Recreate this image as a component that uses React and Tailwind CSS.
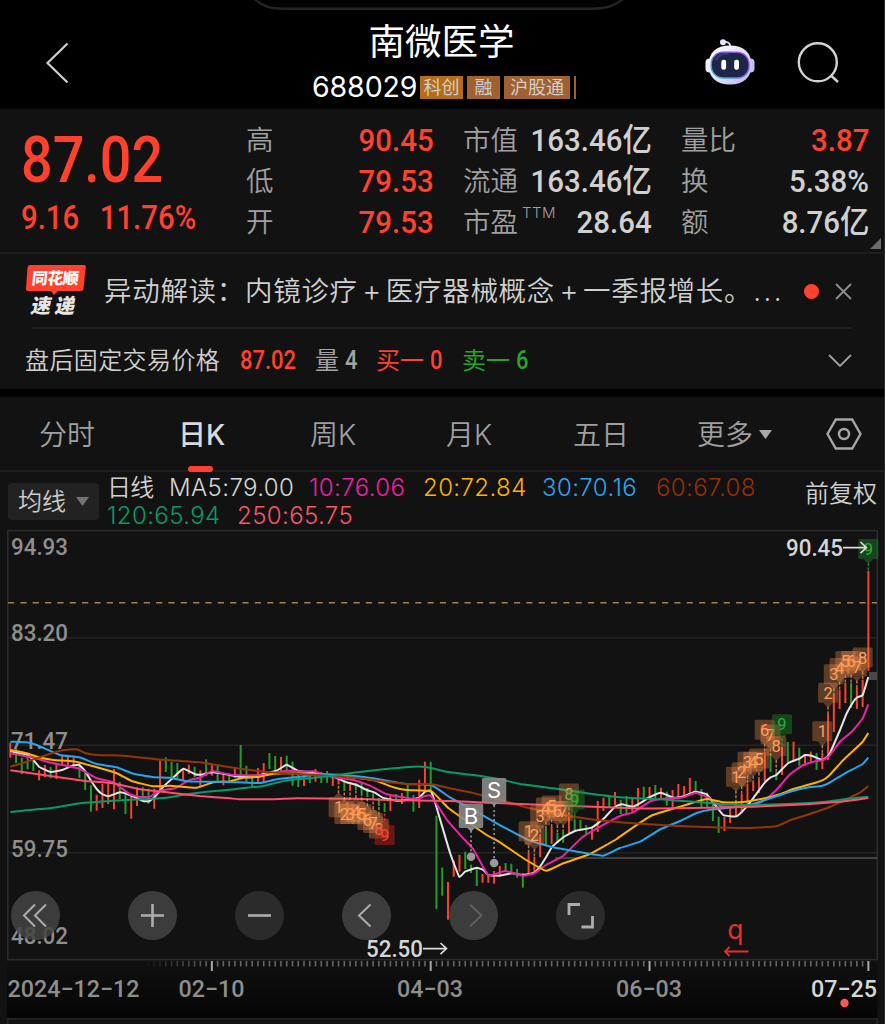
import React from "react";

const SANS = "font-['Inter','Noto_Sans_CJK_SC',sans-serif]";
const DIGITS = "font-['Roboto','Noto_Sans_CJK_SC',sans-serif] font-medium";

const STATS = [
  {
    width: "ml-[246px] w-[188px]",
    rows: [
      { label: "高", value: "90.45", up: true },
      { label: "低", value: "79.53", up: true },
      { label: "开", value: "79.53", up: true },
    ],
  },
  {
    width: "ml-[29px] w-[189px]",
    rows: [
      { label: "市值", value: "163.46", unit: "亿" },
      { label: "流通", value: "163.46", unit: "亿" },
      { label: "市盈", sup: "TTM", value: "28.64" },
    ],
  },
  {
    width: "ml-[29px] w-[188px]",
    rows: [
      { label: "量比", value: "3.87", up: true },
      { label: "换", value: "5.38%" },
      { label: "额", value: "8.76", unit: "亿" },
    ],
  },
];

const AVERAGES = [
  { label: "MA5:79.00", className: "w-[140px] text-[#d6d6d6]" },
  { label: "10:76.06", className: "w-[114px] text-[#ee1fa2]" },
  { label: "20:72.84", className: "w-[119px] text-[#ffb000]" },
  { label: "30:70.16", className: "w-[114px] text-[#27a5f2]" },
  { label: "60:67.08", className: "text-[#953000]" },
];

// One entry per trading day: direction, high, low
const CANDLES = `r742.7,757.7 g749,763 g757.7,774 g755,769.3 g758.3,771 r770.3,780.3 r765,777 g767,778.3 r764.3,779 r755,765
r756,765.7 r757.3,765.7 g762.3,778 g772.3,790 g785.3,811.7 r794.7,810.7 r783.7,808 r782.3,804 r769,809.3 g782,799
g794.3,814 r793.7,818.7 r787.3,806 g787.3,799.3 g788.7,803.7 r788.7,808.7 r760.3,791.7 g757.3,772 g762,777.3 g763,778.3
r768.3,780 r764.7,774 g766.7,777.3 r770.3,786 g759.3,776 r763.7,775.7 g764.3,781 r774,785.3 g775,782 r767.7,778
g745,778 g765.7,783 g775,787 r768,782 r763,782 g753,769 g756,772 r757,771 g755.7,771 g761.7,785.7
g771.7,787 r773,786 g773,783 r769,781.7 g772,783 g771,782.7 r776.7,786 r777,784 g780,791 r782,791
g783,790 g782.7,793 g788,797 g793,800 g798,806 g803,812 r795,811 g794,800 r793,804 g783.7,800
g795,811.7 r779.7,808 r761.7,792 g761.7,793 g815.7,909 g867.7,895.7 r882,919.7 r860.7,876.7 r855,871.7 g851.7,869
g864.7,873 g869,886 r874,882.7 r874,882.7 r871,883.7 r866,875 g863,871 g863.7,874 g869,877.7 g873,887.7
r853,873 r857,871.7 r836.7,857 g829,845 r827,844 g833,843 g831.7,842.7 r814,833 g820,830 g820,829
g825,835 r828,839.7 r801,832 r797.7,811 g796.7,808 r792,805 g800,814 g796,813 r799,811.7 r788,806.7
g786.7,800 r787,797 g785,799 r787.7,798 g791.7,805.7 r790,807.7 r784,799 r786,796.7 r778,795 g781,794
g789,807 g792.7,808 g799.7,821 g816.7,833 r816.7,831 r807.7,823 r801,816 r794,813 r783.7,805 r781.7,791
r780,793 r751.7,781.7 g755,772 g771,780 r746.7,775 g742,762 r741.7,761 g747.7,765.7 r755,765.7 r751.7,762
g753,770 r753,769 r714,760 r695,732 r690,709 r683,703 g683,708 r687.7,709 r679.7,707 r571,671`
  .split(/\s+/)
  .map((entry) => {
    const [high, low] = entry.slice(1).split(",").map(Number);
    return { up: entry[0] === "r", high, low };
  });

const dayX = (i) => 10.3 + i * 5.759;

const MA_LINES = [
  {
    color: "#e4e4e4",
    points:
      "10.3,750.7 16,752.7 27.3,755 33.3,760 39,766.7 50.7,772 62,770 73.7,765.3 79.3,765 85,771 90.7,780.3 96.7,789 102,794 108.3,796.3 120,792.3 131.7,795.7 143.3,801 149,801.3 155,796.7 163.3,786.7 171.7,779 183.3,768.7 195,774.3 200.7,774.7 213.3,772.3 230,775 240,776.7 253.3,777 263.3,774 276.7,770.7 286.7,764.7 298.3,771 316.7,772.7 335,777.3 346.7,782.3 356.7,785 366.7,790 375,792.7 383.3,798 396.7,800.7 406.7,800 419.3,797.7 425,791.7 430.7,790.7 435,802.3 450,852.7 459.3,876.7 465,871.7 476.7,867.7 483.3,870 488.3,875 500,875.7 511.7,873.3 523,875 534.3,872.7 540,866.7 546,857.3 551.7,847.3 563.3,837.3 575,831 591.7,827.7 603.3,819 615,806.7 621.7,804.3 633.3,806.7 641,802.7 648,798 661,792.7 673.3,797.7 684,796.3 695,791.7 706.7,794.3 713,802.3 723.3,815 736.7,816.3 746.7,806.7 755,795.7 765,782.3 770.7,777.3 776.3,775 788.3,763 800,758.3 805,755 811.7,755.7 822.3,760 829,755 840,730 846.7,713.3 853.3,701.7 857.3,697.3 862.7,695 868.3,677",
  },
  {
    color: "#ee22a4",
    points:
      "10.3,753.3 33.3,757.7 50.7,762.7 79.3,768.7 96.7,778.3 113.3,782.3 130,794.3 140,797 150,796.7 160,790.7 175,788.3 190,779.7 200,777.7 211.7,771 223.3,773.3 233.3,775 263,775 286.7,770.7 303,771.7 313,771.3 335,777.3 353.3,780 370,785.7 386.7,794.3 400,796.7 416.7,799.3 425,796 430.7,795.7 448.3,821.7 463.3,838.3 473.3,849.3 488.3,875 505,871 523,875.7 534.3,873.3 546,865 563.3,855.7 581.7,837.7 600,826.7 620,816 633.3,812.3 650,801.5 661,799 683.3,797.3 695.7,792.7 708.3,797.7 720,805.7 736.7,806.7 753.3,805 765,800 776.3,790 790,774.3 803.3,765 816.7,761 822.3,760.3 829,756.3 840,741.7 851.7,731.7 862.7,718.3 868.3,704.3",
  },
  {
    color: "#ffb000",
    points:
      "10.3,750 26.7,753.3 39,757.3 53.3,760 73.3,761.3 93.3,766.3 116.7,773.3 131.7,781 153.3,786.3 170,785.7 196.7,787.7 213.3,782.3 230,781.5 243.3,777.7 260,776.7 273.3,773.7 303,773.7 335,775.7 360,778.3 376.7,781 393.3,787.3 406.7,790 431.7,791.3 448.3,808 486.7,835 500,842.3 523,858 546,870.7 563.3,863.3 590,854 616.7,839 631.7,828.3 651.7,815.5 680,806.7 706.7,799 723.3,802.3 740,802.3 765,798.3 780,794.3 793.3,789 810,784.3 822.3,780.3 829,775.7 843.3,760 862.7,741.7 868.3,733",
  },
  {
    color: "#27a5f2",
    points:
      "10.3,741.7 26.7,742.3 36.7,745 60,755 79.3,757.3 96.7,764 116.7,767.3 133.3,773.7 155,777.3 170,777.7 186.7,781.3 230,782 260,783 276.7,779.3 300,776.7 320,774.3 346.7,775.3 373.3,778.3 406.7,784 431.7,785.3 450,797.3 473.3,810 496.7,823.3 530,840.7 553.3,847.3 586.7,853.3 603.3,855.7 620,848 640,841.7 660,829.5 680,821 696.7,813 710,809.7 746.7,805.7 760,801.7 790,791.7 806.7,787.7 822.3,785.7 829,783 846.7,772.3 862.7,764 868.3,757.7",
  },
  {
    color: "#963403",
    points:
      "10.3,766.7 26.7,761.7 43.3,756 63.3,750 76.7,749.3 85,753 96.7,755 123.3,755.7 156.7,759.3 200,762.3 230,767.3 263.3,771.7 286.7,773.3 326.7,775.7 360,778.3 380,781 406.7,784 431.7,784.3 450,788.3 470,792.3 496.7,799 530,808.3 563.3,815 596.7,820 633.3,823.3 673.3,825.7 706.7,827 743.3,828 776.3,826.3 790,820.3 806.7,815 826.7,808.3 846.7,799 860,792.7 868.3,786",
  },
  {
    color: "#089a68",
    points:
      "10.3,812 26.7,810.3 53.3,807.7 80,803.3 113.3,800.7 140,799.3 166.7,797.7 186.7,794.3 206.7,791.7 230,789.7 243.3,788 263.3,786 286.7,780.3 313.3,777.7 333.3,775.7 353.3,772.7 383.3,769.3 413.3,766.7 426.7,767.3 450,772.3 473.3,775 500,779.3 520,784 553.3,788.3 586.7,793.3 620,797.3 660,799.3 680,800.7 713,803.3 743.3,805 780,804.3 820,802.3 846.7,799 868.3,796.7",
  },
  {
    color: "#ff4f6d",
    points:
      "10.3,770.3 83.3,780.7 113,783.3 140,789.3 166.7,792.3 200,796 230,798.3 240,799.3 273.3,799.3 296.7,798.3 353.3,798.7 386.7,800 450,801 486.7,802.7 553.3,805.3 620,807.7 650,808.5 706.7,807.7 753.3,806.7 806.7,804.3 840,801.7 868.3,798",
  },
];

// Nine-turn sequence marks: [day index, centre y, digit, tone]
const MARKS_BELOW = [
  [57, 807.3, 1], [58, 814, 2], [59, 814, 3], [60, 812, 4], [61, 814.3, 5],
  [62, 820, 6], [63, 823, 7], [64, 828.5, 8], [65, 835, 9, "red"],
];
const MARKS_ABOVE = [
  [90, 831.3, 1], [91, 835, 2], [92, 815.5, 3], [93, 807.5, 4], [94, 805.5, 5],
  [95, 811, 6], [96, 811, 7], [97, 793.5, 8], [98, 799.5, 9, "green"],
  [126, 776.7, 1], [127, 772.3, 2], [128, 761.7, 3], [129, 761.7, 4],
  [130, 758.5, 5], [131, 729.7, 6], [132, 734.5, 7], [133, 746, 8],
  [134, 724.3, 9, "green"], [141, 731.3, 1], [142, 692.7, 2], [143, 674.3, 3],
  [144, 668, 4], [145, 661, 5], [146, 661, 6], [147, 666.5, 7], [148, 657.5, 8],
  [149, 549, 9, "green"],
];
const TONES = {
  orange: { box: "#ff9550", opacity: 0.32, text: "#ffa161" },
  red: { box: "#c8281e", opacity: 0.45, text: "#ff3b30" },
  green: { box: "#1f8a2c", opacity: 0.42, text: "#27b035" },
};

function smooth(points) {
  const p = points.split(" ").map((s) => s.split(",").map(Number));
  let d = `M${p[0][0]} ${p[0][1]}`;
  for (let i = 0; i < p.length - 1; i++) {
    const a = p[Math.max(i - 1, 0)];
    const b = p[i];
    const c = p[i + 1];
    const e = p[Math.min(i + 2, p.length - 1)];
    const k = (c[0] - b[0]) / 8;
    const s1 = (c[1] - a[1]) / (c[0] - a[0]);
    const s2 = (e[1] - b[1]) / (e[0] - b[0]);
    d += `C${b[0] + k} ${b[1] + s1 * k} ${c[0] - k} ${c[1] - s2 * k} ${c[0]} ${c[1]}`;
  }
  return d;
}

function Mark({ day, y, digit, tone = "orange", below = false }) {
  const x = dayX(day);
  const t = TONES[tone];
  const dir = below ? -1 : 1;
  const edge = y + dir * 10;
  const end = below ? CANDLES[day].low : CANDLES[day].high;
  return (
    <g>
      <line x1={x} x2={x} y1={edge + dir * 4} y2={end} stroke={t.text} strokeWidth="1.5" strokeDasharray="3 1.5" opacity=".7" />
      <g fill={t.box} opacity={t.opacity}>
        <rect x={x - 10} y={y - 10} width="20" height="20" rx="1.5" />
        <path d={`M${x - 5} ${edge}h10l-5 ${dir * 5}z`} />
      </g>
      <text x={x} y={y + 6} fontSize="16.5" textAnchor="middle" fill={t.text}>
        {digit}
      </text>
    </g>
  );
}

function AxisText({ x, y, width, fill = "#8e8e8e", children }) {
  return (
    <text x={x} y={y} fontSize="24" fontWeight="500" fill={fill} textLength={width} lengthAdjust="spacingAndGlyphs">
      {children}
    </text>
  );
}

function TradeTag({ x, y, letter, dotY }) {
  return (
    <g>
      <line x1={x} x2={x} y1={y + 15} y2={dotY} stroke="#999" strokeWidth="1.6" strokeDasharray="2 2.6" />
      <circle cx={x} cy={dotY} r="4.3" fill="#999" />
      <rect x={x - 12.2} y={y - 12.3} width="24.4" height="24.6" rx="1.5" fill="#8c8c8c" opacity=".88" />
      <path d={`M${x - 4} ${y + 12}h8l-4 4z`} fill="#8c8c8c" />
      <text x={x} y={y + 8} fontSize="22" textAnchor="middle" fill="#fff" className="font-['Inter',sans-serif]">
        {letter}
      </text>
    </g>
  );
}

function KLineChart() {
  const ticks = [];
  for (let i = 24; i < 150; i++) {
    const major = i === 35 || i === 73 || i === 111 || i === 149;
    ticks.push(
      <line
        key={i}
        x1={dayX(i)}
        x2={dayX(i)}
        y1="961"
        y2={major ? 971 : 966.5}
        stroke={major ? "#a8a8a8" : "#666"}
        strokeWidth={major ? 2 : 1.6}
        opacity={major ? 1 : Math.min(1, (i - 23) / 12)}
      />
    );
  }
  return (
    <svg width="885" height="495" viewBox="0 529 885 495" className="block font-['Roboto',sans-serif] font-normal">
      <defs>
        <linearGradient id="axis" x1="0" y1="0" x2="0" y2="1">
          <stop offset="0" stopColor="#101010" />
          <stop offset="1" stopColor="#050505" />
        </linearGradient>
      </defs>
      <rect x="7" y="960" width="870.5" height="58" fill="url(#axis)" />
      <g stroke="#252525" strokeWidth="1.6" fill="none">
        <path d="M8 637.8H877M8 745.3H877M8 852.8H877" stroke="#242424" />
        <rect x="7.8" y="530.6" width="869.4" height="429" stroke="#2b2b2b" />
        <path d="M7.8 1024V1018.7H877.2V1024" />
      </g>
      <path d="M555 858H877" stroke="#414141" strokeWidth="1.8" />
      <path d="M8 602.8H877" stroke="#a08156" strokeWidth="1.5" strokeDasharray="6.2 6.14" />

      {CANDLES.map((c, i) => (
        <rect key={i} x={dayX(i) - 1} y={c.high} width="2" height={c.low - c.high} fill={c.up ? "#f5432f" : "#249b2a"} />
      ))}
      <AxisText x="11" y="554.5" width="57">94.93</AxisText>
      <AxisText x="11" y="641.2" width="57">83.20</AxisText>
      <AxisText x="11" y="749" width="57">71.47</AxisText>
      <AxisText x="11" y="856.8" width="57">59.75</AxisText>
      <AxisText x="11" y="943.6" width="57">48.02</AxisText>

      {MA_LINES.map((line) => (
        <path key={line.color} d={smooth(line.points)} fill="none" stroke={line.color} strokeWidth="2" strokeLinejoin="round" />
      ))}
      <rect x="869" y="672" width="8" height="8" fill="#484848" />

      <TradeTag x={471} y={815.8} letter="B" dotY={856.7} />
      <TradeTag x={494.1} y={790.3} letter="S" dotY={863} />

      {MARKS_BELOW.map(([day, y, digit, tone]) => (
        <Mark key={day} day={day} y={y} digit={digit} tone={tone} below />
      ))}
      {MARKS_ABOVE.map(([day, y, digit, tone]) => (
        <Mark key={day} day={day} y={y} digit={digit} tone={tone} />
      ))}

      <AxisText x="786" y="556.2" width="57" fill="#d6d6d6">90.45</AxisText>
      <path d="M843 547.6H866M860.5 542l6 5.6-6 5.6" fill="none" stroke="#dcdcdc" strokeWidth="1.6" />
      <AxisText x="366" y="957.4" width="57" fill="#d6d6d6">52.50</AxisText>
      <path d="M423 948.6H446M440.5 943l6 5.6-6 5.6" fill="none" stroke="#dcdcdc" strokeWidth="1.6" />

      <text x="735.5" y="939" fontSize="26" textAnchor="middle" fill="#e62e2e" className="font-['DejaVu_Sans',sans-serif]">q</text>
      <path d="M748.5 951.5H725M729.5 947l-4.5 4.5 4.5 4.5" fill="none" stroke="#e62e2e" strokeWidth="1.8" />

      {ticks}
      <AxisText x="7.5" y="996.8" width="132">2024−12−12</AxisText>
      <AxisText x="178.5" y="996.8" width="66">02−10</AxisText>
      <AxisText x="397" y="996.8" width="66">04−03</AxisText>
      <AxisText x="616" y="996.8" width="66">06−03</AxisText>
      <AxisText x="811" y="996.8" width="66" fill="#d6d6d6">07−25</AxisText>
      <circle cx="844.5" cy="1003" r="4.2" fill="#ff5757" />
    </svg>
  );
}

function RoundButton({ dim = false, className = "", children }) {
  return (
    <button className={`flex size-[49px] items-center justify-center rounded-full ${dim ? "bg-[#2f2f2f]/90" : "bg-[#444444]/85"} ${className}`}>
      <svg width="49" height="49" viewBox="0 0 49 49" fill="none" stroke="currentColor" strokeWidth="2">
        {children}
      </svg>
    </button>
  );
}

function RobotIcon() {
  return (
    <svg width="52" height="48" viewBox="0 0 52 48">
      <defs>
        <linearGradient id="shell" x1="0" y1="0" x2="1" y2="1">
          <stop offset="0" stopColor="#ffffff" />
          <stop offset=".6" stopColor="#dcdaf4" />
          <stop offset="1" stopColor="#b5b0e6" />
        </linearGradient>
        <linearGradient id="rim" x1="0" y1="1" x2="1" y2="0">
          <stop offset="0" stopColor="#3fc4e8" />
          <stop offset=".55" stopColor="#6a5ae8" />
          <stop offset="1" stopColor="#b34ff0" />
        </linearGradient>
      </defs>
      <path d="M19 4.2C23 3 26 4.500 26.500 9" fill="none" stroke="#dddcf2" strokeWidth="1.800" />
      <circle cx="19" cy="4.300" r="3" fill="#e9e8fa" />
      <rect x="1.500" y="20.500" width="8" height="14" rx="4" fill="#efeefb" />
      <rect x="42.500" y="20.500" width="8" height="14" rx="4" fill="#c4c0ea" />
      <path d="M26 7.500c14 0 21.500 7.500 21.500 19.500S40 46.500 26 46.500 4.500 39 4.500 27 12 7.500 26 7.500z" fill="url(#shell)" />
      <rect x="7.200" y="14.200" width="37.800" height="25.800" rx="12" fill="#1e2547" stroke="url(#rim)" strokeWidth="1.400" />
      <path d="M12 22c2-5 7-6.500 13-6.500" fill="none" stroke="#46507c" strokeWidth="2" opacity=".6" />
      <rect x="17.300" y="21.800" width="4.800" height="10" rx="2.200" fill="#fff" />
      <rect x="30.200" y="21.800" width="4.800" height="10" rx="2.200" fill="#fff" />
    </svg>
  );
}

function Header() {
  return (
    <header className="relative flex h-[109px] justify-between bg-black">
      <svg width="372" height="12" viewBox="253 0 372 12" className="absolute top-0 left-[253px]">
        <path d="M254 -2Q263 8.800 283 8.800H592Q613 8.800 624 -2" fill="#020202" stroke="#242424" strokeWidth="2.400" />
      </svg>
      <button className="ml-[45px] mt-[42px] h-[42px]">
        <svg width="25" height="42" viewBox="0 0 25 42" fill="none" stroke="#cfcfcf" strokeWidth="2.200">
          <path d="M22.500 1.500 2.500 21l20 19.500" />
        </svg>
      </button>
      <div className="absolute top-[20px] left-[312px] flex w-[266px] flex-col">
        <h1 className="pr-[7px] text-center text-[36.500px] leading-[44px] text-white">南微医学</h1>
        <div className="flex h-[46px] items-center">
          <span className="w-[108px] text-[28.500px] leading-[46px] tracking-[-0.100px] text-white">688029</span>
          <div className="flex h-[23px] gap-1 text-[18px] leading-[23px] text-[#cfcfcf]">
            <span className="w-[43px] bg-[#b36d16] text-center">科创</span>
            <span className="w-[33px] bg-[#9f6132] text-center">融</span>
            <span className="w-[66px] bg-[#9f6132] text-center">沪股通</span>
            <span className="w-[2px] bg-[#9f6132]" />
          </div>
        </div>
      </div>
      <div className="mr-[45px] flex">
        <button className="mt-[38px] mr-[40px] h-12">
          <RobotIcon />
        </button>
        <button className="mt-[41px] h-[44px]">
          <svg width="44" height="44" viewBox="0 0 44 44" fill="none" stroke="#d2d2d2" strokeWidth="2.400">
            <circle cx="21.800" cy="21.300" r="19" />
            <path d="M34.500 34l7.500 7" />
          </svg>
        </button>
      </div>
    </header>
  );
}

function Quote() {
  return (
    <section className="relative flex h-[145px] border-b-2 border-[#1e1e1e]">
      <div className={`absolute top-0 left-0 text-[#ff412e] ${DIGITS}`}>
        <div className="mt-[13px] ml-[21px] origin-left scale-x-[0.87] text-[64px] leading-[77px] whitespace-nowrap">87.02</div>
        <div className="mt-[2px] ml-[21px] flex origin-left scale-x-[0.89] gap-[23px] text-[33px] leading-[34px] whitespace-nowrap">
          <span>9.16</span>
          <span>11.76%</span>
        </div>
      </div>
      {STATS.map((col) => (
        <div key={col.width} className={`flex flex-col pt-[10px] ${col.width}`}>
          {col.rows.map((row) => (
            <div key={row.label} className="flex h-[41px] items-center justify-between whitespace-nowrap">
              <span className="mt-[3px] text-[27.500px] font-[350] text-[#a0a0a0]">
                {row.label}
                {row.sup && <sup className="top-[-14px] ml-1 text-[15px] tracking-[0.5px]">{row.sup}</sup>}
              </span>
              <span
                className={`origin-right scale-x-[0.92] text-[32px] ${DIGITS} ${row.up ? "text-[#ff412e]" : "text-[#d0d0d0]"}`}
              >
                {row.value}
                {row.unit}
              </span>
            </div>
          ))}
        </div>
      ))}
      <svg width="11" height="11" className="absolute right-[4px] bottom-[3px]">
        <path d="M11 0V11H0z" fill="#6b6b6b" />
      </svg>
    </section>
  );
}

function Plus() {
  return <span className="inline-block w-[28px] text-center text-[29px] leading-none font-light tracking-normal">+</span>;
}

function NewsBar() {
  return (
    <section className="mx-[25px] flex h-[74px] items-center">
      <div className="w-[79px] shrink-0">
        <div className="relative flex h-[26px] w-[60px] items-center justify-center">
          <svg width="62" height="32" className="absolute top-0 left-0">
            <path d="M5 0H59q2 0 1.800 2L58.500 23.500q-.3 2.500-2.500 2.500H33l-4 4-3-4H3q-2.300 0-2-2.500L2.500 2.500Q2.800 0 5 0z" fill="#ff412e" />
          </svg>
          <span className="relative -skew-x-6 text-[16px] leading-[26px] font-black tracking-[-0.5px] text-white">同花顺</span>
        </div>
        <div className="ml-[7px] flex h-[26px] -skew-x-12 gap-[4px] text-[20px] leading-[30px] font-black text-[#e6e6e6]">
          <span>速</span>
          <span>递</span>
        </div>
      </div>
      <div className="w-[700px] shrink-0 pt-[2px] text-[27.500px] font-[350] tracking-[0.700px] whitespace-nowrap text-[#d0d0d0]">
        异动解读：内镜诊疗
        <Plus />
        医疗器械概念
        <Plus />
        一季报增长。<span className="ml-[1px] tracking-[2.500px]">...</span>
      </div>
      <span className="size-[15px] shrink-0 rounded-full bg-[#ff412e]" />
      <svg width="17" height="17" viewBox="0 0 17 17" className="ml-[16px] shrink-0" fill="none" stroke="#8f8f8f" strokeWidth="1.800">
        <path d="M1 1l15 15M16 1 1 16" />
      </svg>
    </section>
  );
}

function AfterHours() {
  const digit = "inline-block origin-left scale-x-[0.88] text-[25px] font-['Roboto',sans-serif] font-medium";
  return (
    <section className="flex h-[60px] items-center pt-[3px] pl-[25px] text-[24px] whitespace-nowrap">
      <span className="w-[215px] font-[350] tracking-[0.400px] text-[#d0d0d0]">盘后固定交易价格</span>
      <span className={`w-[75px] text-[#ff412e] ${digit}`}>87.02</span>
      <span className="flex w-[61px] items-center gap-[6px] text-[#a3a3a3]">
        量<span className={digit}>4</span>
      </span>
      <span className="flex w-[86px] items-center gap-[6px] text-[#ff412e]">
        买一<span className={digit}>0</span>
      </span>
      <span className="flex items-center gap-[6px] text-[#27a52b]">
        卖一<span className={digit}>6</span>
      </span>
      <svg width="24" height="14" viewBox="0 0 24 14" className="mr-[33px] ml-auto" fill="none" stroke="#a0a0a0" strokeWidth="1.800">
        <path d="M1 1l11 11L23 1" />
      </svg>
    </section>
  );
}

function Tabs() {
  return (
    <nav className="flex h-[75px] items-center border-b-2 border-[#1e1e1e] pt-[2px] pl-[39px] text-[28px] font-[350] whitespace-nowrap text-[#a0a0a0]">
      <span className="w-[139px]">分时</span>
      <span className="relative w-[132px] font-medium text-[#dadada]">
        日K
        <span className="absolute -bottom-[16px] left-[10px] h-[6px] w-[25px] rounded-full bg-[#ff412e]" />
      </span>
      <span className="w-[136px]">周K</span>
      <span className="w-[127px]">月K</span>
      <span className="w-[124px]">五日</span>
      <span className="flex items-center gap-[6px]">
        更多
        <svg width="13" height="10">
          <path d="M0 0H13L6.500 9z" fill="#a8a8a8" />
        </svg>
      </span>
      <svg width="36" height="32" viewBox="0 0 36 32" className="mr-[23px] mb-[2px] ml-auto" fill="none" stroke="#a6a6a6" strokeWidth="2.400">
        <path d="M9.800 1.500H26.200L34.500 16 26.200 30.500H9.800L1.500 16z" />
        <circle cx="18" cy="16" r="5" />
      </svg>
    </nav>
  );
}

function Legend() {
  return (
    <div className="flex h-[57px] pl-[8px] whitespace-nowrap">
      <button className="mt-[11px] flex h-[37px] w-[91px] items-center justify-center gap-[10px] rounded bg-[#222222] text-[24px] font-[350] text-[#cccccc]">
        均线
        <svg width="13" height="9">
          <path d="M0 0H13L6.500 9z" fill="#727272" />
        </svg>
      </button>
      <div className="ml-[8px] text-[24px] leading-[28px] font-[350] tracking-[0.400px]">
        <div className="mt-[2px] flex h-[28px]">
          <span className="w-[62px] tracking-[-0.800px] text-[#d0d0d0]">日线</span>
          {AVERAGES.map((ma) => (
            <span key={ma.label} className={ma.className}>
              {ma.label}
            </span>
          ))}
        </div>
        <div className="flex h-[28px]">
          <span className="w-[130px] text-[#089a68]">120:65.94</span>
          <span className="text-[#ff536e]">250:65.75</span>
        </div>
      </div>
      <span className="mt-[7px] mr-[8px] ml-auto text-[24px] leading-[30px] font-[350] text-[#d0d0d0]">前复权</span>
    </div>
  );
}

export default function App() {
  return (
    <div className={`relative h-[1024px] w-[885px] overflow-hidden bg-[#121212] ${SANS}`}>
      <Header />
      <Quote />
      <NewsBar />
      <div className="mr-[33px] ml-[33px] -mt-px h-[2px] bg-[#1e1e1e]" />
      <AfterHours />
      <div className="h-[8px] bg-black" />
      <Tabs />
      <Legend />
      <div className="relative">
        <KLineChart />
        <div className="absolute top-[362px] left-[10.500px] flex gap-[58px] text-[#adadad]">
          <RoundButton className="mr-[10px]">
            <path d="M24 13.500 13 24.500 24 35.500M35 13.500 24 24.500 35 35.500" />
          </RoundButton>
          <RoundButton>
            <path d="M13 24.500H36M24.500 13V36" strokeWidth="2.600" />
          </RoundButton>
          <RoundButton dim>
            <path d="M13 24.500H36" strokeWidth="2.600" />
          </RoundButton>
          <RoundButton>
            <path d="M28.500 13.500 17 24.500 28.500 35.500" />
          </RoundButton>
          <RoundButton className="text-[#606060]">
            <path d="M21 13.500 32.500 24.500 21 35.500" />
          </RoundButton>
          <RoundButton dim>
            <path d="M13 24V13.500H24M25.500 36H36.500V25" strokeWidth="2.800" />
          </RoundButton>
        </div>
      </div>
      <div className="absolute inset-y-0 right-0 w-px bg-[#292929]" />
    </div>
  );
}
